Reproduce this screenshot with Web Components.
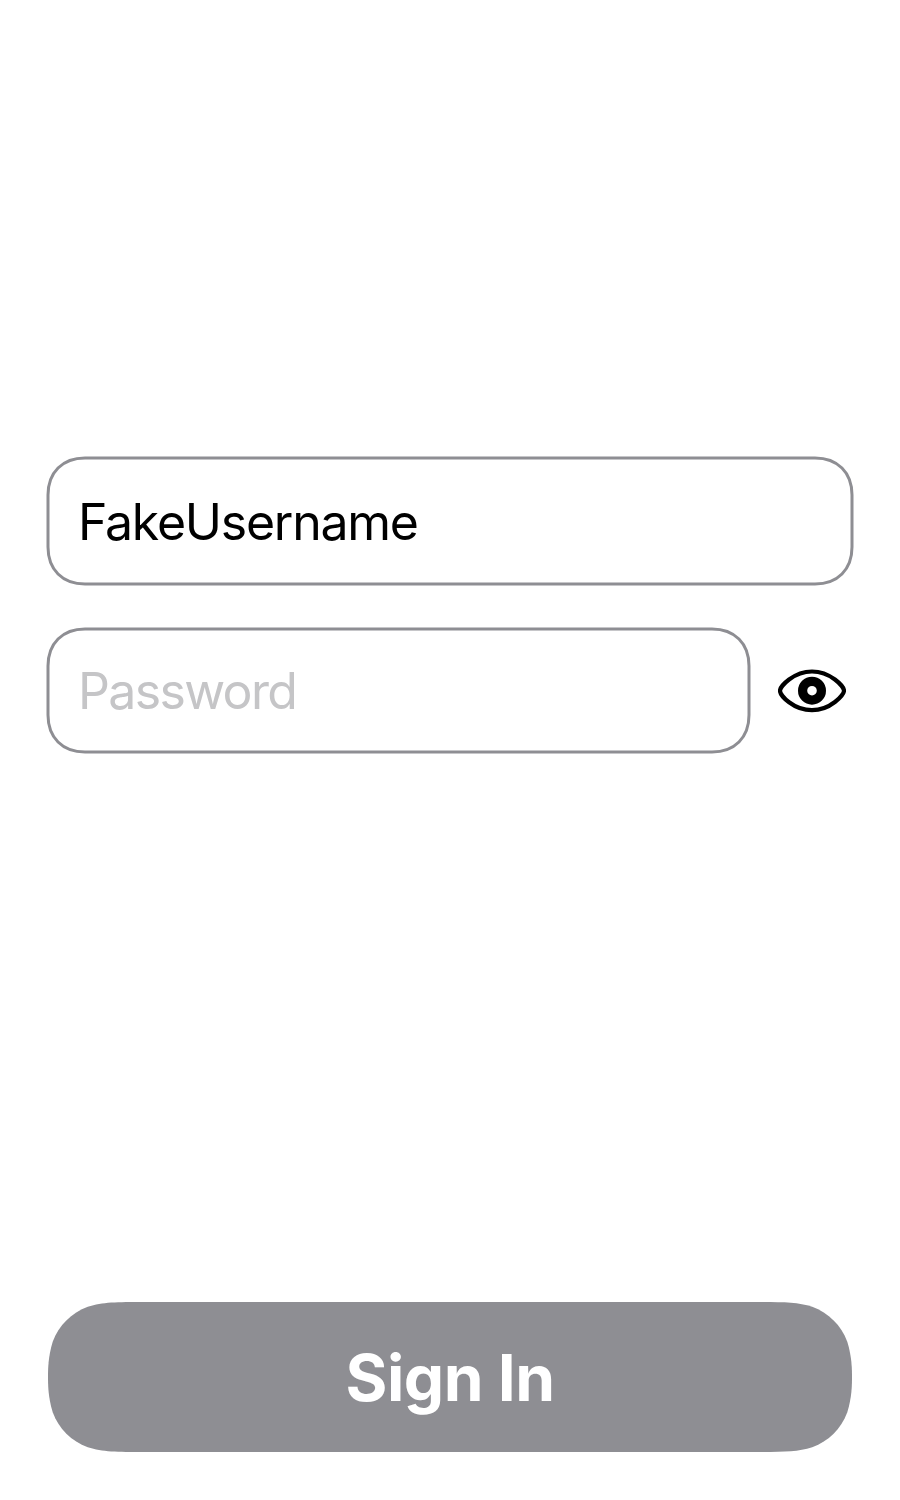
<!DOCTYPE html>
<html lang="en">
<head>
<meta charset="utf-8">
<title>Sign In</title>
<style>
html, body { margin: 0; background: #fff; }
body { font-family: Inter, "Liberation Sans", sans-serif; }
</style>
</head>
<body>
<sign-in-screen></sign-in-screen>
<script>
// Rounded rectangle with continuous-curvature corners.
function squircle(w, h, r) {
  const t = 1.528665 * r, ex = Math.min(t, w / 2), ey = Math.min(t, h / 2);
  const a = 1.08849296 * r, b = 0.86840694 * r, c = 0.63149379 * r,
        d = 0.07491139 * r, e = 0.37282383 * r, f = 0.16905956 * r;
  return `M${ex},0H${w - ex}C${w - a},0 ${w - b},0 ${w - c},${d}C${w - e},${f} ${w - f},${e} ${w - d},${c}C${w},${b} ${w},${Math.min(a, ey)} ${w},${ey}` +
    `V${h - ey}C${w},${h - Math.min(a, ey)} ${w},${h - b} ${w - d},${h - c}C${w - f},${h - e} ${w - e},${h - f} ${w - c},${h - d}C${w - b},${h} ${w - a},${h} ${w - ex},${h}` +
    `H${ex}C${a},${h} ${b},${h} ${c},${h - d}C${e},${h - f} ${f},${h - e} ${d},${h - c}C0,${h - b} 0,${h - Math.min(a, ey)} 0,${h - ey}` +
    `V${ey}C0,${Math.min(a, ey)} 0,${b} ${d},${c}C${f},${e} ${e},${f} ${c},${d}C${b},0 ${a},0 ${ex},0Z`;
}

// Rounded rectangle with one soft cubic curve per corner.
function softRect(w, h, r) {
  const k = 0.39 * r;
  return `M${r},0H${w - r}C${w - k},0 ${w},${k} ${w},${r}V${h - r}C${w},${h - k} ${w - k},${h} ${w - r},${h}` +
    `H${r}C${k},${h} 0,${h - k} 0,${h - r}V${r}C0,${k} ${k},0 ${r},0Z`;
}

class SmoothBox extends HTMLElement {
  constructor() {
    super();
    this.attachShadow({ mode: 'open' }).innerHTML = `
      <style>
        :host { display: grid; grid-template: 100% / 100%; width: 100%; height: 100%; }
        svg, .content { grid-area: 1 / 1; min-width: 0; }
        svg { width: 100%; height: 100%; overflow: visible; }
        path { fill: var(--fill, none); stroke: var(--stroke, none); stroke-width: 3px; }
        .content { display: flex; align-items: center; justify-content: var(--justify, flex-start); z-index: 1; }
      </style>
      <svg aria-hidden="true"><path/></svg>
      <div class="content"><slot></slot></div>`;
  }
  connectedCallback() {
    new ResizeObserver(() => this.draw()).observe(this);
    this.draw();
  }
  draw() {
    const shape = this.hasAttribute('soft') ? softRect : squircle;
    this.shadowRoot.querySelector('path').setAttribute('d',
      shape(this.clientWidth, this.clientHeight, +this.getAttribute('radius')));
  }
}
customElements.define('smooth-box', SmoothBox);

customElements.define('text-field', class extends HTMLElement {
  constructor() {
    super();
    this.attachShadow({ mode: 'open' }).innerHTML = `
      <style>
        :host { display: block; }
        smooth-box { --stroke: #8e8e93; }
        span { padding: var(--nudge, 0) 0 0 30px; font-size: 50px; line-height: 60px; letter-spacing: var(--tracking, 0); color: #000; white-space: nowrap; }
        :host([placeholder]) span { color: #c5c5c7; }
      </style>
      <smooth-box soft radius="37"><span><slot></slot></span></smooth-box>`;
  }
});

customElements.define('eye-toggle', class extends HTMLElement {
  constructor() {
    super();
    this.attachShadow({ mode: 'open' }).innerHTML = `
      <style>:host { display: block; width: 68px; height: 44px; } svg { display: block; }</style>
      <svg width="68" height="44" viewBox="0 0 68 44" role="img" aria-label="Show password">
        <path d="M2 21.700C2 17.500 15.500 2.500 34 2.500S66 17.500 66 21.700S52.500 41.200 34 41.200S2 26.500 2 21.700Z" fill="none" stroke="#000" stroke-width="4.200"/>
        <circle cx="34" cy="21.700" r="9.400" fill="none" stroke="#000" stroke-width="9.200"/>
      </svg>`;
  }
});

customElements.define('primary-button', class extends HTMLElement {
  constructor() {
    super();
    this.attachShadow({ mode: 'open' }).innerHTML = `
      <style>
        :host { display: block; height: 150px; }
        smooth-box { --fill: #8e8e93; --justify: center; }
        span { padding-top: 2px; color: #fff; font-size: 64px; font-weight: 700; line-height: 78px; letter-spacing: var(--tracking, 0); white-space: nowrap; }
      </style>
      <smooth-box radius="63"><span><slot></slot></span></smooth-box>`;
  }
});

customElements.define('sign-in-screen', class extends HTMLElement {
  constructor() {
    super();
    this.attachShadow({ mode: 'open' }).innerHTML = `
      <style>
        :host { display: flex; flex-direction: column; box-sizing: border-box; height: 1500px; padding: 458px 48px 48px; }
        .user { height: 126px; --tracking: -1.25px; --nudge: 2px; }
        .row { display: flex; align-items: center; gap: 29px; height: 123px; margin-top: 45px; }
        .pass { flex: none; width: 701px; height: 123px; --tracking: -1.65px; }
        primary-button { margin-top: auto; --tracking: -0.5px; }
      </style>
      <text-field class="user">FakeUsername</text-field>
      <div class="row">
        <text-field class="pass" placeholder>Password</text-field>
        <eye-toggle></eye-toggle>
      </div>
      <primary-button>Sign In</primary-button>`;
  }
});
</script>
</body>
</html>
